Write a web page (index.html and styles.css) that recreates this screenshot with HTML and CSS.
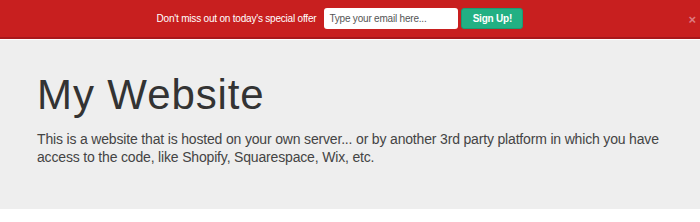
FILE: index.html
```html
<!DOCTYPE html>
<html lang="en">
<head>
    <meta charset="UTF-8">
    <title>My Website</title>
    <link rel="stylesheet" href="styles.css">
</head>
<body>
    <div class="offer-bar">
        <form class="offer-form">
            <span class="offer-text">Don't miss out on today's special offer</span>
            <input type="email" class="offer-input" placeholder="Type your email here...">
            <button type="button" class="offer-button">Sign Up!</button>
        </form>
        <span class="offer-close">&times;</span>
    </div>

    <div class="hero">
        <div class="container">
            <h1>My Website</h1>
            <p>This is a website that is hosted on your own server... or by another 3rd party platform in which you have access to the code, like Shopify, Squarespace, Wix, etc.</p>
        </div>
    </div>
</body>
</html>
```

FILE: styles.css
```css
body {
    margin: 0;
    background: #ffffff;
    font-family: "Liberation Sans", Arial, sans-serif;
    color: #333333;
}

.offer-bar {
    position: relative;
    height: 37px;
    background: #c81f1f;
    border-bottom: 2px solid #a8181b;
}

.offer-form {
    display: flex;
    align-items: center;
    justify-content: center;
    height: 100%;
    padding-right: 20px;
    margin: 0;
}

.offer-text {
    color: #ffffff;
    font-size: 10px;
    letter-spacing: -0.2px;
    margin-right: 8px;
}

.offer-input {
    box-sizing: border-box;
    width: 134px;
    height: 21px;
    padding: 0 5px;
    border: none;
    border-radius: 3px;
    background: #ffffff;
    font-family: inherit;
    font-size: 10px;
    letter-spacing: -0.2px;
    color: #555555;
    margin-right: 3px;
}

.offer-input::placeholder {
    color: #555555;
}

.offer-button {
    box-sizing: border-box;
    width: 62px;
    height: 21px;
    border: 1px solid #1c9a73;
    border-radius: 3px;
    background: #22b083;
    color: #ffffff;
    font-family: inherit;
    font-size: 10px;
    letter-spacing: -0.2px;
    font-weight: bold;
    padding: 0;
}

.offer-close {
    position: absolute;
    right: 4px;
    top: 12px;
    font-size: 13px;
    line-height: 15px;
    font-weight: bold;
    color: #dd7a80;
}

.hero {
    background: #eeeeee;
    border-top: 1px solid #ffffff;
    padding: 32px 0 43px;
}

.container {
    padding-left: 37px;
    width: 640px;
}

h1 {
    margin: 0 0 12px;
    font-size: 42px;
    line-height: 46px;
    letter-spacing: 0.9px;
    font-weight: normal;
    color: #333333;
}

p {
    margin: 0;
    font-size: 14px;
    line-height: 18px;
    letter-spacing: -0.17px;
    color: #444444;
}
```
